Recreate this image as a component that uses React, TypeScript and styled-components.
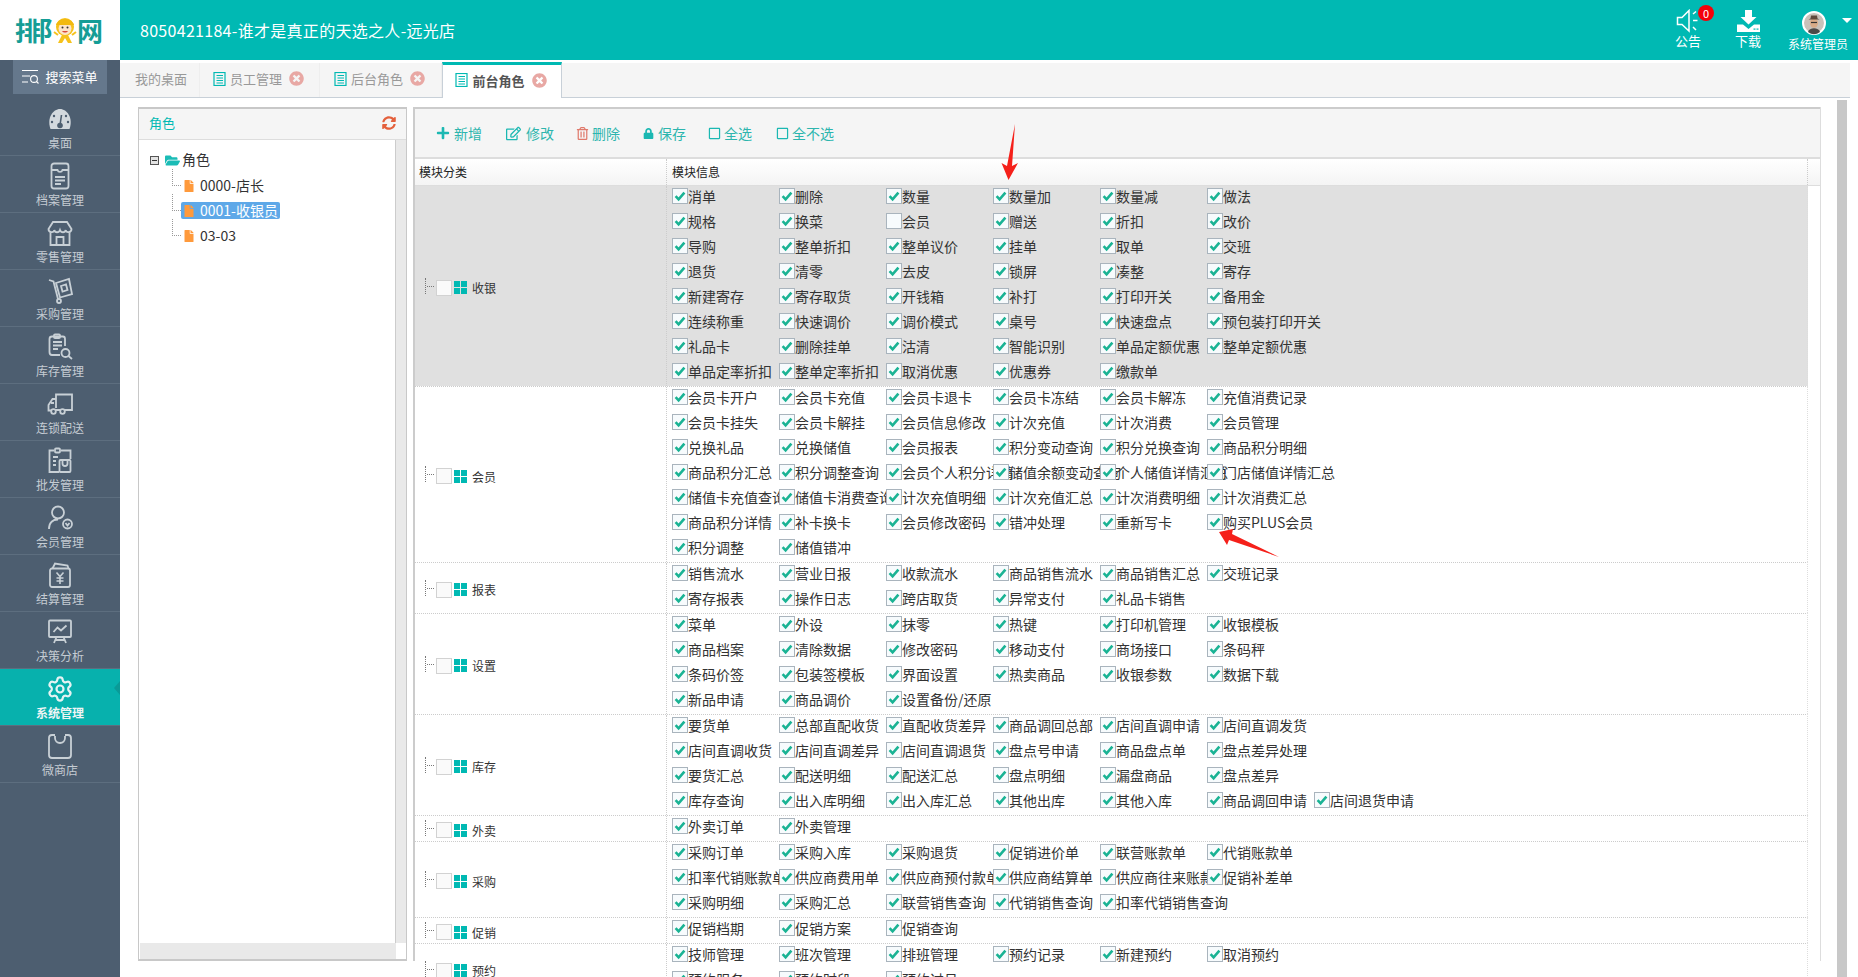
import * as React from "react"
import styled, { createGlobalStyle } from "styled-components"
import { Settings } from "lucide-react"
import {
  FaPlus,
  FaRegEdit,
  FaRegTrashAlt,
  FaLock,
  FaRegSquare,
  FaSyncAlt,
  FaTimesCircle,
  FaFolderOpen,
  FaFile,
} from "react-icons/fa"

const TEAL = "#00b9b3"
const SIDE = "#4d5e70"

const GlobalStyle = createGlobalStyle`
  html, body {
    margin: 0;
    height: 100%;
    overflow: hidden;
    background: #fff;
    font-family: "Noto Sans CJK SC", "Liberation Sans", sans-serif;
    font-size: 14px;
    color: #333;
  }
  * { box-sizing: border-box; }
`

const Page = styled.div`
  width: 1858px;
  height: 977px;
  position: relative;
  overflow: hidden;
  display: flex;
  flex-direction: column;
`

/* header */
const Header = styled.header`
  height: 60px;
  flex: none;
  display: flex;
  background: ${TEAL};
  color: #fff;
`
const Logo = styled.div`
  width: 120px;
  flex: none;
  background: #fff;
  display: flex;
  align-items: center;
  padding: 0 0 0 15px;
  color: #159d96;
  font-size: 26px;
  font-weight: 700;
  line-height: 32px;
`
const LogoPart = styled.span<{ $w: number }>`
  width: ${({ $w }) => $w}px;
  flex: none;
`
const Title = styled.div`
  padding-left: 20px;
  font-size: 16px;
  letter-spacing: 0.3px;
  line-height: 60px;
  flex: 1;
`
const HeaderItem = styled.div<{ $w: number }>`
  position: relative;
  width: ${({ $w }) => $w}px;
  flex: none;
  display: flex;
  flex-direction: column;
  align-items: center;
  padding-top: 9px;
  font-size: 13px;
  line-height: 16px;
  white-space: nowrap;
`
const HeaderIcon = styled.div<{ $shift?: number }>`
  height: 24px;
  margin: ${({ $shift }) => ($shift ? `2px ${$shift}px 0 0` : "0")};
  display: flex;
  align-items: center;
  justify-content: center;
`
const UserName = styled.span`
  font-size: 12px;
  margin-top: 1px;
`
const Badge = styled.span`
  position: absolute;
  top: 5px;
  left: 40px;
  width: 16px;
  height: 16px;
  border-radius: 50%;
  background: #f4000a;
  color: #fff;
  font-size: 11px;
  line-height: 16px;
  text-align: center;
`
const Caret = styled.span`
  position: absolute;
  top: 18px;
  right: 6px;
  border-left: 5px solid transparent;
  border-right: 5px solid transparent;
  border-top: 5px solid #fff;
`

/* sidebar */
const Body = styled.div`
  flex: 1;
  display: flex;
  min-height: 0;
`
const Sidebar = styled.aside`
  width: 120px;
  flex: none;
  background: ${SIDE};
  display: flex;
  flex-direction: column;
`
const SearchMenu = styled.div`
  height: 34px;
  margin: 0 13px 5px;
  padding-bottom: 2px;
  background: #65788c;
  color: #fff;
  font-size: 13px;
  display: flex;
  align-items: center;
  justify-content: center;
  gap: 6px;
`
const NavItem = styled.div<{ $active?: boolean }>`
  position: relative;
  height: 57px;
  flex: none;
  display: flex;
  flex-direction: column;
  align-items: center;
  padding-top: 6px;
  border-bottom: 1px solid #5d6e7f;
  background: ${({ $active }) => ($active ? "#07b1ad" : "transparent")};
  color: ${({ $active }) => ($active ? "#eef5f5" : "#c5ccd3")};
  font-size: 12px;
  font-weight: ${({ $active }) => ($active ? 700 : 400)};
  line-height: 16px;
  svg {
    display: block;
    margin-bottom: 2px;
  }
  &::after {
    content: "";
    display: ${({ $active }) => ($active ? "block" : "none")};
    position: absolute;
    right: 0;
    top: 12px;
    border-top: 7px solid transparent;
    border-bottom: 7px solid transparent;
    border-right: 6px solid #0a9a97;
  }
`

/* tabs */
const Main = styled.main`
  flex: 1;
  min-width: 0;
  display: flex;
  flex-direction: column;
`
const TabStrip = styled.div`
  height: 35px;
  margin: 3px 8px 0 0;
  flex: none;
  display: flex;
  background: #f5f5f5;
  border-bottom: 1px solid #c8d0d8;
`
const Tab = styled.div<{ $w: number; $active?: boolean }>`
  width: ${({ $w }) => $w}px;
  height: ${({ $active }) => ($active ? "36px" : "34px")};
  margin-top: ${({ $active }) => ($active ? "-1px" : "0")};
  padding: 0 2px 3px 0;
  flex: none;
  display: flex;
  align-items: center;
  justify-content: center;
  gap: 4px;
  font-size: 13px;
  color: ${({ $active }) => ($active ? "#555" : "#999")};
  font-weight: ${({ $active }) => ($active ? 700 : 400)};
  background: ${({ $active }) => ($active ? "#fff" : "transparent")};
  border-top: ${({ $active }) => ($active ? `3px solid ${TEAL}` : "none")};
  border-right: 1px solid ${({ $active }) => ($active ? "#c8d0d8" : "#eee")};
  border-left: ${({ $active }) => ($active ? "1px solid #c8d0d8" : "none")};
  svg.close {
    color: #e8a8a4;
    margin-left: 3px;
  }
`
const PlainTab = styled(Tab)`
  padding-left: 3px;
  padding-right: 0;
`

/* workspace */
const Workspace = styled.div`
  flex: 1;
  min-height: 0;
  display: flex;
  padding: 2px 0 0 18px;
`
const LeftPanel = styled.section`
  width: 269px;
  height: 854px;
  margin: 7px 6px 0 0;
  flex: none;
  display: flex;
  flex-direction: column;
  border: 1px solid #c8c8c8;
  border-top-width: 2px;
  border-bottom-width: 2px;
`
const PanelHead = styled.div`
  height: 31px;
  flex: none;
  padding: 0 10px 3px;
  display: flex;
  align-items: center;
  justify-content: space-between;
  background: #f5f5f5;
  border-bottom: 1px solid #ddd;
  color: ${TEAL};
  font-size: 13px;
  svg {
    color: #e4603c;
    margin-top: 1px;
  }
`
const PanelBody = styled.div`
  flex: 1;
  min-height: 0;
  display: grid;
  grid-template-columns: 1fr 10px;
  grid-template-rows: 1fr 16px;
`
const TreeArea = styled.div`
  padding: 8px 0 0 11px;
  border-right: 1px solid #ccc;
`
const ScrollV = styled.div`
  background: #e9e9e9;
`
const ScrollH = styled.div`
  background: #e9e9e9;
  margin-left: 1px;
`
const TreeRow = styled.div<{ $child?: boolean }>`
  position: relative;
  height: 25px;
  display: flex;
  align-items: center;
  gap: 2px;
  padding-left: ${({ $child }) => ($child ? "33px" : "0")};
  font-size: 14px;
  line-height: 17px;
  color: #333;
`
const TreeRootText = styled.span`
  margin-top: -2px;
`
const Minus = styled.span`
  width: 9px;
  height: 9px;
  margin-right: 4px;
  flex: none;
  border: 1px solid #555;
  background: #e3e3e3;
  position: relative;
  &::after {
    content: "";
    position: absolute;
    left: 1px;
    right: 1px;
    top: 3px;
    height: 1px;
    background: #333;
  }
`
const TreeConnector = styled.span`
  position: absolute;
  left: 22px;
  top: -4px;
  width: 9px;
  height: 17px;
  border-left: 1px dotted #999;
  border-bottom: 1px dotted #999;
`
const TreeLabel = styled.span<{ $selected?: boolean }>`
  display: flex;
  align-items: center;
  height: 17px;
  gap: 5px;
  padding: 0 2px;
  margin-left: -2px;
  border-radius: 2px;
  background: ${({ $selected }) => ($selected ? "#5ea8e8" : "transparent")};
  color: ${({ $selected }) => ($selected ? "#fff" : "#333")};
  svg {
    color: #ff9a3c;
  }
`

const RightPanel = styled.section`
  width: 1408px;
  height: 854px;
  margin-top: 7px;
  flex: none;
  border-left: 2px solid #ccc;
  border-right: 1px solid #ddd;
`
const Toolbar = styled.div`
  height: 52px;
  display: flex;
  align-items: center;
  padding: 0 0 0 21px;
  background: #f5f5f5;
  border-top: 2px solid #ccc;
  border-bottom: 2px solid #ddd;
`
const ToolButton = styled.div<{ $w: number; $gap: number; $danger?: boolean }>`
  width: ${({ $w }) => $w}px;
  flex: none;
  display: flex;
  align-items: center;
  gap: ${({ $gap }) => $gap}px;
  color: #2db5ae;
  font-size: 14px;
  svg {
    color: ${({ $danger }) => ($danger ? "#e0796b" : "#1bb8b2")};
  }
`
const TableHead = styled.div`
  height: 27px;
  display: flex;
  font-size: 12px;
  color: #222;
  line-height: 26px;
  background: linear-gradient(#fff, #f4f4f4);
  border-bottom: 1px solid #ddd;
`
const HeadCell = styled.div<{ $first?: boolean }>`
  width: ${({ $first }) => ($first ? "252px" : "auto")};
  flex: ${({ $first }) => ($first ? "none" : 1)};
  padding-left: ${({ $first }) => ($first ? "4px" : "5px")};
  border-right: 1px dotted #ccc;
`
const HeadEnd = styled.div`
  width: 12px;
  flex: none;
`
const Row = styled.div<{ $shaded?: boolean; $first?: boolean }>`
  width: 1393px;
  display: flex;
  background: ${({ $shaded }) => ($shaded ? "#e0e0e0" : "#fff")};
  border-top: ${({ $first }) => ($first ? "none" : "1px dotted #ccc")};
  border-right: 1px dotted #ddd;
`
const Category = styled.div`
  width: 252px;
  flex: none;
  display: flex;
  align-items: center;
  padding: 3px 0 0 10px;
  border-right: 1px dotted #ccc;
  font-size: 12px;
  color: #333;
`
const Connector = styled.span`
  width: 11px;
  height: 16px;
  flex: none;
  align-self: center;
  margin-top: -4px;
  position: relative;
  border-left: 1px dotted #777;
  &::after {
    content: "";
    position: absolute;
    left: 1px;
    top: 8px;
    width: 7px;
    border-top: 1px dotted #777;
  }
`
const TreeCheck = styled.span`
  width: 16px;
  height: 16px;
  flex: none;
  background: #fafafa;
  border: 1px solid #d2d2d2;
`
const GridIcon = styled.svg`
  flex: none;
  margin: 0 5px 0 2px;
`
const Modules = styled.div`
  flex: 1;
  min-width: 0;
  padding-left: 5px;
`
const Line = styled.div`
  height: 25px;
  display: flex;
`
const Item = styled.div`
  width: 107px;
  flex: none;
  display: flex;
  padding-top: 2px;
  white-space: nowrap;
`
const Box = styled.span`
  width: 16px;
  height: 16px;
  flex: none;
  position: relative;
  background: #f7fbfd;
  border: 1px solid #a9b4bd;
  svg {
    display: block;
  }
`
const Label = styled.span`
  font-size: 14px;
  line-height: 16px;
  color: #333;
`
const PageScroll = styled.div`
  width: 10px;
  height: 877px;
  margin-left: 16px;
  flex: none;
  background: #c8c8c8;
`
const Annotations = styled.svg`
  position: absolute;
  left: 0;
  top: 0;
  pointer-events: none;
`

/* small drawings */
const Check = () => (
  <svg width="14" height="14" viewBox="0 0 14 14">
    <path d="M2.6 7.2 L5.6 10.4 L11.4 3.6" fill="none" stroke="#1ab394" strokeWidth="2.6" />
  </svg>
)

const TabIcon = () => (
  <svg width="13" height="14" viewBox="0 0 13 14" fill="none" stroke={TEAL}>
    <rect x="1" y="0.5" width="11" height="13" strokeWidth="1.2" />
    <path d="M3.5 3.5H10M3.5 6H10M3.5 8.5H10M3.5 11H10" strokeWidth="1" />
  </svg>
)

const SearchIcon = () => (
  <svg width="17" height="15" viewBox="0 0 17 15" fill="none" stroke="#fff" strokeWidth="1.1">
    <path d="M0 1.5H16M0 7H8M0 13H6" />
    <circle cx="12" cy="10" r="3.4" />
    <path d="M14.5 12.5L16.5 14.5" />
  </svg>
)

const navIcons: Record<string, React.ReactNode> = {
  gauge: (
    <>
      <path d="M4.5 24 C0.5 13 7 4 14 4 C21 4 27.5 13 23.5 24 Z" fill="#d3d9de" stroke="none" />
      <path d="M15.5 10L14 20" stroke={SIDE} strokeWidth="1.6" />
      <circle cx="14" cy="20.5" r="2.8" fill={SIDE} stroke="none" />
      <circle cx="8" cy="11" r="1.2" fill={SIDE} stroke="none" />
      <circle cx="20" cy="11" r="1.2" fill={SIDE} stroke="none" />
      <circle cx="6" cy="17" r="1.2" fill={SIDE} stroke="none" />
      <circle cx="22" cy="17" r="1.2" fill={SIDE} stroke="none" />
    </>
  ),
  file: (
    <>
      <rect x="5.5" y="1.5" width="17" height="25" rx="2.5" />
      <path d="M5.5 8H11.5A2.6 2.6 0 0 0 16.5 8H22.5M9 15H19M9 18.5H19M9 22H15" />
    </>
  ),
  store: (
    <>
      <path d="M7 3H21L25.5 10C25.5 14 20 14 19.7 11C19 14 15 14 14 11C13 14 9 14 8.3 11C8 14 2.5 14 2.5 10Z" />
      <path d="M4.5 13.5V26H23.5V13.5M10.5 26V18H17.5V26" />
    </>
  ),
  cart: (
    <>
      <path d="M3 4L7.5 5.5L12 23" />
      <path d="M10 7L23 3L26 18L14 21.5Z" />
      <path d="M15 10L20 8.5L21.5 14L16.5 15.5Z" />
      <circle cx="13" cy="25" r="2" />
    </>
  ),
  search: (
    <>
      <path d="M19 13V6C19 4.5 18 3.5 17 3.5H6C4.5 3.5 3.5 4.5 3.5 6V19C3.5 21 4.5 22 6 22H14" />
      <rect x="8" y="1.5" width="6" height="3.5" rx="1" />
      <path d="M7 9H16M7 12.5H16M7 16H12" />
      <circle cx="19.5" cy="20" r="4" />
      <path d="M22.5 23L26 26" />
    </>
  ),
  truck: (
    <>
      <path d="M10 18V4.5H26V20H19" />
      <path d="M10 9H6.5L2.5 15V20.5H5" />
      <path d="M5 13H8M10 20H14" />
      <circle cx="7.5" cy="21.5" r="2.3" />
      <circle cx="16.5" cy="21.5" r="2.3" />
    </>
  ),
  bag: (
    <>
      <path d="M8 3.5H3.5V25H13M15 3.5H24.5V12" />
      <rect x="9" y="1.5" width="5" height="4" rx="1" />
      <path d="M7 10H12M7 14H10M7 18H10" />
      <rect x="13.5" y="13" width="11" height="12" rx="1" />
      <path d="M16.5 13V16.5A2.5 2.5 0 0 0 21.5 16.5V13" />
    </>
  ),
  user: (
    <>
      <circle cx="12" cy="8.5" r="6" />
      <path d="M3 25C3 18 7 15.5 12 15.5" />
      <circle cx="21.5" cy="20" r="4.5" />
      <path d="M19.5 19L21.5 21.5L23.5 19" />
    </>
  ),
  wallet: (
    <>
      <rect x="4" y="7.5" width="20" height="18.5" rx="2" />
      <path d="M6.5 7.5L9 2.5L21.5 4.5L22.5 7.5" />
      <path d="M10.5 11.5L14 15.5L17.5 11.5M14 15.5V23M10.5 17H17.5M10.5 20H17.5" strokeWidth="1.6" />
    </>
  ),
  chart: (
    <>
      <rect x="3" y="2.5" width="22" height="16.5" rx="1" />
      <path d="M7.5 14L11.5 9.5L15 12.5L20.5 7.5" />
      <path d="M10.5 19L8 25M17.5 19L20 25M9.5 22H18.5" />
    </>
  ),
  shop: (
    <>
      <path d="M9 3H6C4 3 3 4 3 6V23C3 25 4 26 6 26H22C24 26 25 25 25 23V6C25 4 24 3 22 3H19" />
      <path d="M9 4V6A5 5 0 0 0 19 6V4" />
    </>
  ),
}

const NavIcon: React.FC<{ kind: string }> = ({ kind }) =>
  kind === "gear" ? (
    <Settings size={28} strokeWidth={1.9} color="#e4f3f3" />
  ) : (
    <svg width="28" height="28" viewBox="0 0 28 28" fill="none" stroke="#c8d0d6" strokeWidth="1.8">
      {navIcons[kind]}
    </svg>
  )

const LogoMonkey = () => (
  <svg width="24" height="28" viewBox="0 0 24 28">
    <path d="M9 19L5 27H9L12 22L15 27H19L15 19Z" fill="#f6c21c" />
    <path d="M5 19L1 16M19 19L23 16" stroke="#f6c21c" strokeWidth="2" />
    <circle cx="12" cy="11" r="9" fill="#f6c21c" />
    <circle cx="12" cy="12.5" r="6.5" fill="#fde4c8" />
    <path d="M3 9C5 1 19 1 21 9Z" fill="#f2b90f" />
    <circle cx="9.5" cy="11.5" r="1" fill="#333" />
    <circle cx="14.5" cy="11.5" r="1" fill="#333" />
    <path d="M9 15C10.5 17 13.5 17 15 15Z" fill="#d94a3a" />
  </svg>
)

const Speaker = () => (
  <svg width="24" height="24" viewBox="0 0 24 24" fill="none" stroke="#fff" strokeWidth="1.5">
    <path d="M1.5 8.5H6L13 1.5V22L6 15.5H1.5Z" />
    <path d="M17 5L20 2.5M17 11.5H21.5M17 18L20 21" />
  </svg>
)

const Download = () => (
  <svg width="23" height="23" viewBox="0 0 23 23" fill="#fff">
    <path d="M8 0H15V7H19.5L11.5 14.5L3.5 7H8Z" />
    <path d="M0 14.5H6L11.5 19L17 14.5H23V22H0Z" />
    <rect x="16.5" y="18.5" width="2" height="1.2" fill={TEAL} />
    <rect x="19.5" y="18.5" width="2" height="1.2" fill={TEAL} />
  </svg>
)

const Avatar = () => (
  <svg width="24" height="24" viewBox="0 0 24 24">
    <circle cx="12" cy="12" r="11" fill="#c9c2ba" stroke="#fff" strokeWidth="2" />
    <path d="M6 21C7 16 17 16 18 21A10 10 0 0 1 6 21Z" fill="#4c4a49" />
    <ellipse cx="12" cy="12" rx="4" ry="4.8" fill="#d9ab88" />
    <path d="M6.5 8.5H17.5L15.5 7.5L15 4.5H9L8.5 7.5Z" fill="#5f4a3c" />
    <path d="M9 11.5H15" stroke="#333" strokeWidth="1.2" />
  </svg>
)

const Grid = () => (
  <GridIcon width="13" height="13" viewBox="0 0 13 13" fill={TEAL}>
    <rect width="6" height="6" />
    <rect x="7" width="6" height="6" />
    <rect y="7" width="6" height="6" />
    <rect x="7" y="7" width="6" height="6" />
  </GridIcon>
)

const sideItems = [
  ["gauge", "桌面"],
  ["file", "档案管理"],
  ["store", "零售管理"],
  ["cart", "采购管理"],
  ["search", "库存管理"],
  ["truck", "连锁配送"],
  ["bag", "批发管理"],
  ["user", "会员管理"],
  ["wallet", "结算管理"],
  ["chart", "决策分析"],
  ["gear", "系统管理"],
  ["shop", "微商店"],
]

const groups: { name: string; lines: string[][] }[] = [
  {
    name: "收银",
    lines: [
      ["消单", "删除", "数量", "数量加", "数量减", "做法"],
      ["规格", "换菜", "!会员", "赠送", "折扣", "改价"],
      ["导购", "整单折扣", "整单议价", "挂单", "取单", "交班"],
      ["退货", "清零", "去皮", "锁屏", "凑整", "寄存"],
      ["新建寄存", "寄存取货", "开钱箱", "补打", "打印开关", "备用金"],
      ["连续称重", "快速调价", "调价模式", "桌号", "快速盘点", "预包装打印开关"],
      ["礼品卡", "删除挂单", "沽清", "智能识别", "单品定额优惠", "整单定额优惠"],
      ["单品定率折扣", "整单定率折扣", "取消优惠", "优惠券", "缴款单"],
    ],
  },
  {
    name: "会员",
    lines: [
      ["会员卡开户", "会员卡充值", "会员卡退卡", "会员卡冻结", "会员卡解冻", "充值消费记录"],
      ["会员卡挂失", "会员卡解挂", "会员信息修改", "计次充值", "计次消费", "会员管理"],
      ["兑换礼品", "兑换储值", "会员报表", "积分变动查询", "积分兑换查询", "商品积分明细"],
      ["商品积分汇总", "积分调整查询", "会员个人积分详情", "储值余额变动查询", "个人储值详情汇总", "门店储值详情汇总"],
      ["储值卡充值查询", "储值卡消费查询", "计次充值明细", "计次充值汇总", "计次消费明细", "计次消费汇总"],
      ["商品积分详情", "补卡换卡", "会员修改密码", "错冲处理", "重新写卡", "购买PLUS会员"],
      ["积分调整", "储值错冲"],
    ],
  },
  {
    name: "报表",
    lines: [
      ["销售流水", "营业日报", "收款流水", "商品销售流水", "商品销售汇总", "交班记录"],
      ["寄存报表", "操作日志", "跨店取货", "异常支付", "礼品卡销售"],
    ],
  },
  {
    name: "设置",
    lines: [
      ["菜单", "外设", "抹零", "热键", "打印机管理", "收银模板"],
      ["商品档案", "清除数据", "修改密码", "移动支付", "商场接口", "条码秤"],
      ["条码价签", "包装签模板", "界面设置", "热卖商品", "收银参数", "数据下载"],
      ["新品申请", "商品调价", "设置备份/还原"],
    ],
  },
  {
    name: "库存",
    lines: [
      ["要货单", "总部直配收货", "直配收货差异", "商品调回总部", "店间直调申请", "店间直调发货"],
      ["店间直调收货", "店间直调差异", "店间直调退货", "盘点号申请", "商品盘点单", "盘点差异处理"],
      ["要货汇总", "配送明细", "配送汇总", "盘点明细", "漏盘商品", "盘点差异"],
      ["库存查询", "出入库明细", "出入库汇总", "其他出库", "其他入库", "商品调回申请", "店间退货申请"],
    ],
  },
  { name: "外卖", lines: [["外卖订单", "外卖管理"]] },
  {
    name: "采购",
    lines: [
      ["采购订单", "采购入库", "采购退货", "促销进价单", "联营账款单", "代销账款单"],
      ["扣率代销账款单", "供应商费用单", "供应商预付款单", "供应商结算单", "供应商往来账款", "促销补差单"],
      ["采购明细", "采购汇总", "联营销售查询", "代销销售查询", "扣率代销销售查询"],
    ],
  },
  { name: "促销", lines: [["促销档期", "促销方案", "促销查询"]] },
  {
    name: "预约",
    lines: [
      ["技师管理", "班次管理", "排班管理", "预约记录", "新建预约", "取消预约"],
      ["预约服务", "预约时段", "预约过号"],
    ],
  },
]

const App: React.FC = () => {
  return (
    <Page>
      <GlobalStyle />
      <Header>
        <Logo>
          <LogoPart $w={23}>排</LogoPart>
          <LogoPart $w={15}>阝</LogoPart>
          <LogoMonkey />
          <LogoPart $w={27}>网</LogoPart>
        </Logo>
        <Title>8050421184-谁才是真正的天选之人-远光店</Title>
        <HeaderItem $w={60}>
          <HeaderIcon>
            <Speaker />
          </HeaderIcon>
          公告
          <Badge>0</Badge>
        </HeaderItem>
        <HeaderItem $w={60}>
          <HeaderIcon>
            <Download />
          </HeaderIcon>
          下载
        </HeaderItem>
        <HeaderItem $w={80}>
          <HeaderIcon $shift={8}>
            <Avatar />
          </HeaderIcon>
          <UserName>系统管理员</UserName>
          <Caret />
        </HeaderItem>
      </Header>
      <Body>
        <Sidebar>
          <SearchMenu>
            <SearchIcon />
            搜索菜单
          </SearchMenu>
          {sideItems.map(([icon, text]) => (
            <NavItem key={text} $active={icon === "gear"}>
              <NavIcon kind={icon} />
              {text}
            </NavItem>
          ))}
        </Sidebar>
        <Main>
          <TabStrip>
            <PlainTab $w={80}>我的桌面</PlainTab>
            <Tab $w={120}>
              <TabIcon />
              员工管理
              <FaTimesCircle className="close" size={15} />
            </Tab>
            <Tab $w={122}>
              <TabIcon />
              后台角色
              <FaTimesCircle className="close" size={15} />
            </Tab>
            <Tab $w={120} $active>
              <TabIcon />
              前台角色
              <FaTimesCircle className="close" size={15} />
            </Tab>
          </TabStrip>
          <Workspace>
            <LeftPanel>
              <PanelHead>
                角色
                <FaSyncAlt size={14} />
              </PanelHead>
              <PanelBody>
                <TreeArea>
                  <TreeRow>
                    <Minus />
                    <FaFolderOpen size={15} color="#1bbcb6" />
                    <TreeRootText>角色</TreeRootText>
                  </TreeRow>
                  {["0000-店长", "0001-收银员", "03-03"].map((name, i) => (
                    <TreeRow key={name} $child>
                      <TreeConnector />
                      <TreeLabel $selected={i === 1}>
                        <FaFile size={12} />
                        {name}
                      </TreeLabel>
                    </TreeRow>
                  ))}
                </TreeArea>
                <ScrollV />
                <ScrollH />
              </PanelBody>
            </LeftPanel>
            <RightPanel>
              <Toolbar>
                <ToolButton $w={70} $gap={4}>
                  <FaPlus size={14} />
                  新增
                </ToolButton>
                <ToolButton $w={70} $gap={5}>
                  <FaRegEdit size={15} />
                  修改
                </ToolButton>
                <ToolButton $w={67} $gap={3} $danger>
                  <FaRegTrashAlt size={13} />
                  删除
                </ToolButton>
                <ToolButton $w={65} $gap={4}>
                  <FaLock size={11} />
                  保存
                </ToolButton>
                <ToolButton $w={68} $gap={3}>
                  <FaRegSquare size={13} />
                  全选
                </ToolButton>
                <ToolButton $w={70} $gap={3}>
                  <FaRegSquare size={13} />
                  全不选
                </ToolButton>
              </Toolbar>
              <TableHead>
                <HeadCell $first>模块分类</HeadCell>
                <HeadCell>模块信息</HeadCell>
                <HeadEnd />
              </TableHead>
              {groups.map((group, g) => (
                <Row key={group.name} $shaded={g === 0} $first={g === 0}>
                  <Category>
                    <Connector />
                    <TreeCheck />
                    <Grid />
                    {group.name}
                  </Category>
                  <Modules>
                    {group.lines.map((line, l) => (
                      <Line key={l}>
                        {line.map((text) => (
                          <Item key={text}>
                            <Box>{text.startsWith("!") ? null : <Check />}</Box>
                            <Label>{text.replace("!", "")}</Label>
                          </Item>
                        ))}
                      </Line>
                    ))}
                  </Modules>
                </Row>
              ))}
            </RightPanel>
            <PageScroll />
          </Workspace>
        </Main>
      </Body>
      <Annotations width="1858" height="977" viewBox="0 0 1858 977">
        <path d="M1015 124 L1012 166 L1018 163 L1008.5 180 L1001.5 163 L1007 166 Z" fill="#f5201a" />
        <path d="M1219 532 L1233 529 L1232 534 L1279 557 L1229 540 L1227 545 Z" fill="#f5201a" />
      </Annotations>
    </Page>
  )
}

export default App
